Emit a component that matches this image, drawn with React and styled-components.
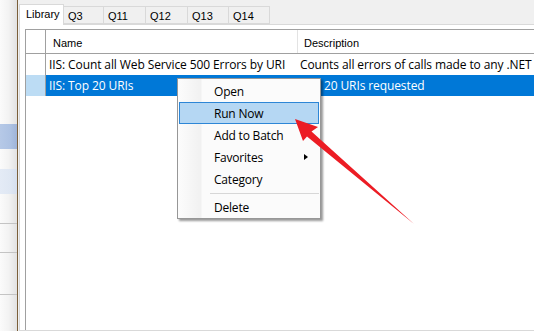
import React from "react";
import styled, { createGlobalStyle, css } from "styled-components";

const Global = createGlobalStyle`
  html, body { margin: 0; padding: 0; background: #f0f0f0; overflow: hidden; }
  #root { width: 534px; height: 331px; }
`;

const Screen = styled.div`
  position: relative;
  width: 534px;
  height: 331px;
  display: flex;
  overflow: hidden;
  background: #f0f0f0;
`;

const NavStrip = styled.div`
  width: 17px;
  flex: none;
  display: flex;
  flex-direction: column;
  border-right: 1px solid #7a5f3a;
`;

const NavCell = styled.div`
  flex: none;
  height: ${(p) => p.$h}px;
  box-sizing: border-box;
  background: linear-gradient(to right, #fbfbfb 0%, #f3f3f3 50%, #e2e2e2 100%);
  ${(p) => p.$line && css`border-bottom: 1px solid #c4c4c4;`}
  ${(p) =>
    p.$state === "selected" &&
    css`background: linear-gradient(to right, #b6c9e7 0%, #adc2e3 60%, #9fb4d8 100%);`}
  ${(p) =>
    p.$state === "hover" &&
    css`background: linear-gradient(to right, #e4ebf6 0%, #dfe7f3 60%, #d6dfee 100%);`}
`;

const NavFill = styled(NavCell)`
  flex: 1;
`;

const Tabs = styled.div`
  flex: none;
  width: 560px;
  margin-left: 1px;
  padding-top: 4px;
  display: flex;
  flex-direction: column;
`;

const TabRow = styled.div`
  display: flex;
  align-items: flex-end;
  height: 20px;
  position: relative;
  z-index: 1;
`;

const Tab = styled.div`
  box-sizing: border-box;
  width: ${(p) => p.$w}px;
  height: ${(p) => (p.$active ? 21 : 18)}px;
  margin-bottom: ${(p) => (p.$active ? -1 : 0)}px;
  border: 1px solid #d9d9d9;
  border-bottom: ${(p) => (p.$active ? "none" : "1px solid #d9d9d9")};
  margin-left: -1px;
  &:first-child { margin-left: 0; }
  background: ${(p) => (p.$active ? "#ffffff" : "#f0f0f0")};
  font-family: "Liberation Sans", Arial, sans-serif;
  font-size: 11px;
  color: #000;
  padding-left: ${(p) => (p.$active ? 6 : 4)}px;
  padding-top: ${(p) => (p.$active ? 3 : 3)}px;
  white-space: nowrap;
`;

const TabPage = styled.div`
  flex: 1;
  background: #ffffff;
  border: 1px solid #d9d9d9;
  padding: 4px 0 0 5px;
  display: flex;
`;

const Grid = styled.div`
  flex: 1;
  border-left: 1px solid #a0a0a0;
  border-top: 1px solid #a0a0a0;
  display: flex;
  flex-direction: column;
  background: #fff;
`;

const Row = styled.div`
  display: grid;
  grid-template-columns: 20px 252px 400px;
  height: ${(p) => (p.$header ? 24 : 21)}px;
  box-sizing: border-box;
  ${(p) => p.$header && css`border-bottom: 1px solid #a0a0a0;`}
`;

const RowHead = styled.div`
  box-sizing: border-box;
  border-right: 1px solid #a0a0a0;
  background: ${(p) => (p.$selected ? "#bcdcf4" : "#ffffff")};
`;

const HeadCell = styled.div`
  box-sizing: border-box;
  border-right: 1px solid #e3e3e3;
  font-family: "Liberation Sans", Arial, sans-serif;
  font-size: 11px;
  color: #000;
  padding: 7px 0 0 ${(p) => p.$pad}px;
  white-space: nowrap;
`;

const Cell = styled.div`
  box-sizing: border-box;
  font-family: "Open Sans", "Noto Sans", sans-serif;
  font-size: 12px;
  letter-spacing: -0.1px;
  line-height: 21px;
  padding-left: ${(p) => p.$pad}px;
  white-space: nowrap;
  overflow: hidden;
  background: ${(p) => (p.$selected ? "#0078d7" : "#ffffff")};
  color: ${(p) => (p.$selected ? "#ffffff" : "#000000")};
`;

const Menu = styled.div`
  position: absolute;
  left: 177px;
  top: 78px;
  width: 144px;
  box-sizing: border-box;
  border: 1px solid #979797;
  padding: 1px 1px 0 1px;
  background: linear-gradient(to right, #fcfcfc 0px, #f1f1f1 23px, #fbfbfb 24px, #fbfbfb 100%);
  box-shadow: 2px 2px 2px rgba(0, 0, 0, 0.4);
  z-index: 5;
`;

const MenuItem = styled.div`
  position: relative;
  box-sizing: border-box;
  height: 22px;
  display: flex;
  align-items: center;
  padding-left: 34px;
  font-family: "Open Sans", "Noto Sans", sans-serif;
  font-size: 12px;
  letter-spacing: -0.2px;
  color: #000;
  border: 1px solid transparent;
  ${(p) =>
    p.$hot &&
    css`
      background: #b5d7f3;
      border-color: #2d86d6;
    `}
`;

const SubArrow = styled.span`
  position: absolute;
  right: 10px;
  top: 7px;
  width: 0;
  height: 0;
  border-top: 3.5px solid transparent;
  border-bottom: 3.5px solid transparent;
  border-left: 4px solid #000;
`;

const Separator = styled.div`
  height: 6px;
  margin-left: 31px;
  box-sizing: border-box;
  border-bottom: 1px solid #d7d7d7;
  transform: translateY(-2px);
`;

const Overlay = styled.svg`
  position: absolute;
  left: 0;
  top: 0;
  width: 534px;
  height: 331px;
  pointer-events: none;
  z-index: 10;
`;

export default function App() {
  const tabs = [
    { t: "Library", w: 45, active: true },
    { t: "Q3", w: 41 },
    { t: "Q11", w: 43 },
    { t: "Q12", w: 43 },
    { t: "Q13", w: 42 },
    { t: "Q14", w: 42 },
  ];
  return (
    <>
      <Global />
      <Screen>
        <NavStrip>
          <NavCell $h={124} />
          <NavCell $h={25} $state="selected" />
          <NavCell $h={20} />
          <NavCell $h={25} $state="hover" />
          <NavCell $h={30} $line />
          <NavCell $h={29} $line />
          <NavCell $h={42} $line />
          <NavFill />
        </NavStrip>
        <Tabs>
          <TabRow>
            {tabs.map((tb) => (
              <Tab key={tb.t} $w={tb.w} $active={tb.active}>
                {tb.t}
              </Tab>
            ))}
          </TabRow>
          <TabPage>
            <Grid>
              <Row $header>
                <RowHead />
                <HeadCell $pad={7}>Name</HeadCell>
                <HeadCell $pad={6}>Description</HeadCell>
              </Row>
              <Row>
                <RowHead />
                <Cell $pad={3}>IIS: Count all Web Service 500 Errors by URI</Cell>
                <Cell $pad={2}>Counts all errors of calls made to any .NET Web Service</Cell>
              </Row>
              <Row>
                <RowHead $selected />
                <Cell $pad={3} $selected>IIS: Top 20 URIs</Cell>
                <Cell $pad={2} $selected>Top 20 URIs requested</Cell>
              </Row>
            </Grid>
          </TabPage>
        </Tabs>
        <Menu>
          <MenuItem>Open</MenuItem>
          <MenuItem $hot>Run Now</MenuItem>
          <MenuItem>Add to Batch</MenuItem>
          <MenuItem>
            Favorites
            <SubArrow />
          </MenuItem>
          <MenuItem>Category</MenuItem>
          <Separator />
          <MenuItem>Delete</MenuItem>
        </Menu>
        <Overlay viewBox="0 0 534 331">
          <polygon
            points="295,119 318,127 311.5,131.5 414,224 307,136.5 303,141"
            fill="#ec1c24"
          />
        </Overlay>
      </Screen>
    </>
  );
}
